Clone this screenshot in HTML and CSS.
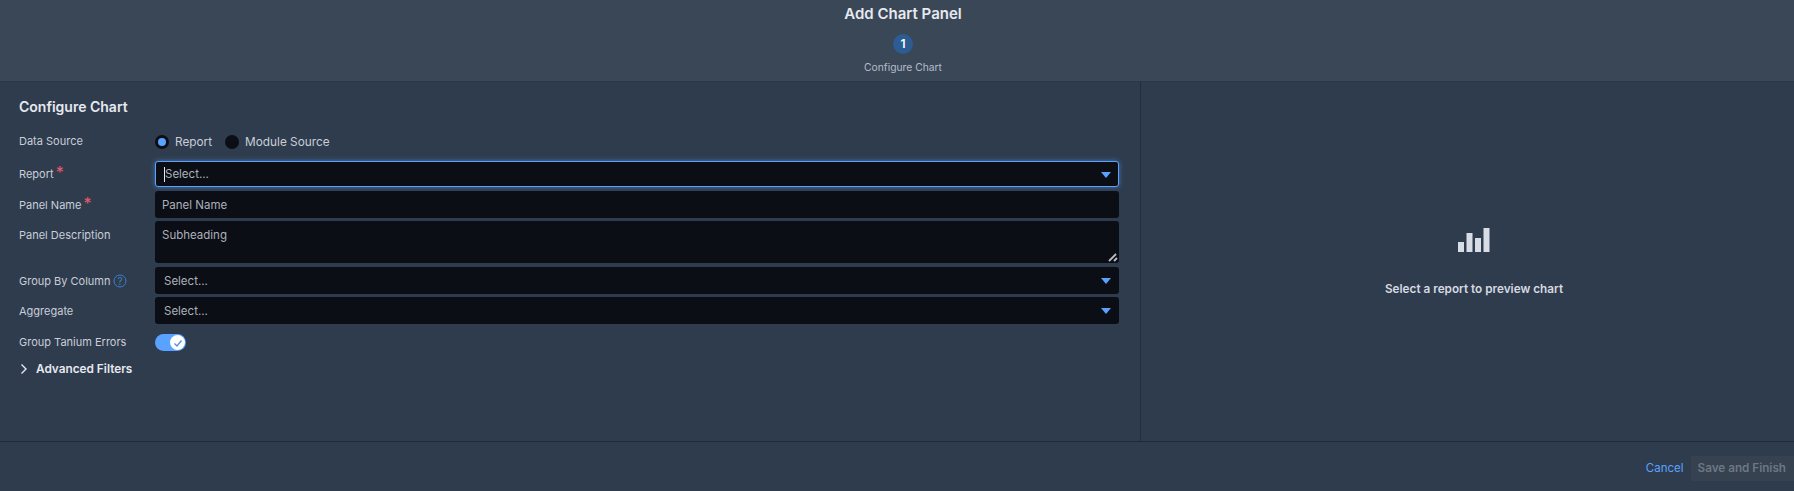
FILE: index.html
```html
<!DOCTYPE html>
<html lang="en">
<head>
    <meta charset="UTF-8">
    <title>Add Chart Panel</title>
    <link rel="stylesheet" href="styles.css">
</head>
<body>
    <header class="header">
        <h1 class="title">Add Chart Panel</h1>
        <div class="step-num">1</div>
        <div class="step-label">Configure Chart</div>
    </header>

    <main class="main">
        <section class="config">
            <h2 class="config-title">Configure Chart</h2>

            <div class="row row-source">
                <div class="label">Data Source</div>
                <div class="radios">
                    <span class="radio radio-on"></span><span class="radio-text">Report</span>
                    <span class="radio"></span><span class="radio-text">Module Source</span>
                </div>
            </div>

            <div class="row row-wide-gap row-report">
                <div class="label">Report <span class="req">*</span></div>
                <div class="field field-focus">
                    <span class="caret"></span><span class="select-first">Select...</span>
                    <span class="arrow"></span>
                </div>
            </div>

            <div class="row">
                <div class="label">Panel Name <span class="req">*</span></div>
                <div class="field"><span>Panel Name</span></div>
            </div>

            <div class="row row-wide-gap">
                <div class="label">Panel Description</div>
                <div class="field field-area">
                    <span>Subheading</span>
                    <svg class="grip" width="10" height="10" viewBox="0 0 10 10">
                        <path d="M1 9 8 2M6 9 9 6" stroke="#b9bcc2" stroke-width="1.8" fill="none"/>
                    </svg>
                </div>
            </div>

            <div class="row">
                <div class="label">Group By Column
                    <svg class="help" width="14" height="14" viewBox="0 0 14 14">
                        <circle cx="7" cy="7" r="6" stroke="#3f7fc4" fill="none"/>
                        <text x="7" y="10.500" text-anchor="middle" class="help-mark">?</text>
                    </svg>
                </div>
                <div class="field">
                    <span class="select-text">Select...</span>
                    <span class="arrow"></span>
                </div>
            </div>

            <div class="row">
                <div class="label">Aggregate</div>
                <div class="field">
                    <span class="select-text">Select...</span>
                    <span class="arrow"></span>
                </div>
            </div>

            <div class="row row-toggle">
                <div class="label">Group Tanium Errors</div>
                <div class="toggle">
                    <span class="knob">
                        <svg width="10" height="10" viewBox="0 0 10 10">
                            <path d="M1.500 5.500 4 8 8.500 2.500" stroke="#5b8fd6" stroke-width="1.400" fill="none"/>
                        </svg>
                    </span>
                </div>
            </div>

            <div class="advanced">
                <svg width="10" height="12" viewBox="0 0 10 12">
                    <path d="M2.500 1.500 7 6l-4.500 4.500" stroke="#e6e9ef" stroke-width="1.400" fill="none"/>
                </svg>
                <span>Advanced Filters</span>
            </div>
        </section>

        <section class="preview">
            <svg width="32" height="24" viewBox="0 0 32 24" class="bars">
                <rect x="0" y="14" width="6" height="10"/>
                <rect x="8.500" y="5" width="6" height="19"/>
                <rect x="17" y="10" width="6" height="14"/>
                <rect x="25.500" y="0" width="6" height="24"/>
            </svg>
            <p class="preview-text">Select a report to preview chart</p>
        </section>
    </main>

    <footer class="footer">
        <a class="cancel" href="#">Cancel</a>
        <span class="save">Save and Finish</span>
    </footer>
</body>
</html>
```

FILE: styles.css
```css
* {
    margin: 0;
    padding: 0;
    box-sizing: border-box;
}

body {
    font-family: Inter, "Noto Sans", sans-serif;
    width: 1794px;
    height: 491px;
    overflow: hidden;
    background: #2f3c4e;
    color: #d5d9e1;
    font-size: 12px;
}

.header {
    height: 82px;
    background: #3a4757;
    display: flex;
    flex-direction: column;
    align-items: center;
    padding: 5px 0 0 12px;
    border-bottom: 1px solid #2c3848;
}

.title {
    font-size: 15px;
    font-weight: 600;
    line-height: 18px;
    color: #e6e9ef;
}

.step-num {
    width: 20px;
    height: 20px;
    margin-top: 11px;
    border-radius: 50%;
    background: #2c5c92;
    color: #fff;
    font-size: 12px;
    font-weight: 600;
    line-height: 20px;
    text-align: center;
}

.step-label {
    margin-top: 6px;
    font-size: 10.300px;
    line-height: 14px;
    color: #b4bccb;
}

.main {
    height: 360px;
    display: flex;
    border-bottom: 1px solid #1f2a38;
}

.config {
    width: 1141px;
    padding: 16px 20px 0 19px;
    border-right: 1px solid #232e3c;
}

.config-title {
    font-size: 14px;
    font-weight: 600;
    line-height: 18px;
    color: #e6e9ef;
    margin-bottom: 15px;
}

.row {
    display: flex;
    margin-bottom: 3px;
}

.row-source {
    height: 28px;
    margin-bottom: 2px;
}

.row-wide-gap {
    margin-bottom: 4px;
}

.row-toggle {
    margin-top: 10px;
    margin-bottom: 0;
}

.label {
    width: 136px;
    padding-top: 5.500px;
    font-size: 11px;
    line-height: 16px;
    color: #c9ced8;
}

.row-source .label {
    padding-top: 2px;
}

.row-report .label {
    padding-top: 5px;
}

.row-toggle .label {
    padding-top: 0;
}

.req {
    color: #ec5a6a;
    font-size: 16px;
    line-height: 12px;
    margin-left: -1px;
}

.help {
    vertical-align: -3px;
    margin-left: -1px;
}

.help-mark {
    fill: #3f7fc4;
    font-size: 10px;
    font-family: Inter, sans-serif;
}

.radios {
    display: flex;
    align-items: center;
    height: 20px;
    margin-top: 1px;
    font-size: 11.800px;
    color: #c9ced8;
}

.radio {
    width: 14px;
    height: 14px;
    border-radius: 50%;
    background: #0b0e15;
    margin-right: 6px;
}

.radio-on {
    background: #5aa2ff;
    border: 3px solid #0b0e15;
}

.radio-text {
    margin-right: 13px;
}

.field {
    position: relative;
    width: 964px;
    height: 27px;
    padding: 0 7px;
    background: #0b0e15;
    border-radius: 3px;
    display: flex;
    align-items: center;
    font-size: 11.500px;
    color: #abb0ba;
}

.field-focus {
    border: 1px solid #5aa2ff;
    box-shadow: 0 0 5px rgba(90, 162, 255, 0.55);
    height: 26px;
}

.field-area {
    height: 42px;
    align-items: flex-start;
    padding-top: 7px;
}

.select-text {
    padding-left: 2px;
}

.caret {
    width: 1px;
    height: 15px;
    margin-left: 1px;
    background: #e6e9ef;
}

.arrow {
    position: absolute;
    right: 8px;
    top: 11px;
    border-left: 5px solid transparent;
    border-right: 5px solid transparent;
    border-top: 6px solid #5aa2ff;
}

.field-focus .arrow {
    right: 7px;
    top: 10px;
}

.grip {
    position: absolute;
    right: 1px;
    bottom: 1px;
}

.toggle {
    width: 31px;
    height: 17px;
    border-radius: 9px;
    background: #5aa2ff;
    display: flex;
    justify-content: flex-end;
    align-items: center;
    padding-right: 1px;
}

.knob {
    width: 15px;
    height: 15px;
    border-radius: 50%;
    background: #fff;
    display: flex;
    align-items: center;
    justify-content: center;
}

.advanced {
    display: flex;
    align-items: center;
    gap: 7px;
    margin-top: 11px;
    font-size: 11.800px;
    font-weight: 600;
    color: #e6e9ef;
}

.preview {
    flex: 1;
    display: flex;
    flex-direction: column;
    align-items: center;
    padding: 146px 0 0 13px;
}

.bars {
    fill: #d8dce5;
}

.preview-text {
    margin-top: 30px;
    font-size: 11.750px;
    font-weight: 600;
    color: #d5d9e1;
}

.footer {
    height: 49px;
    display: flex;
    justify-content: flex-end;
    align-items: center;
    padding-top: 3px;
}

.cancel {
    color: #5aa2ff;
    font-size: 11.500px;
    text-decoration: none;
    margin-right: 7px;
}

.save {
    height: 25px;
    padding: 0 8px 0 7px;
    background: #36424f;
    color: #6e7785;
    font-size: 11.700px;
    font-weight: 600;
    line-height: 25px;
}
```
